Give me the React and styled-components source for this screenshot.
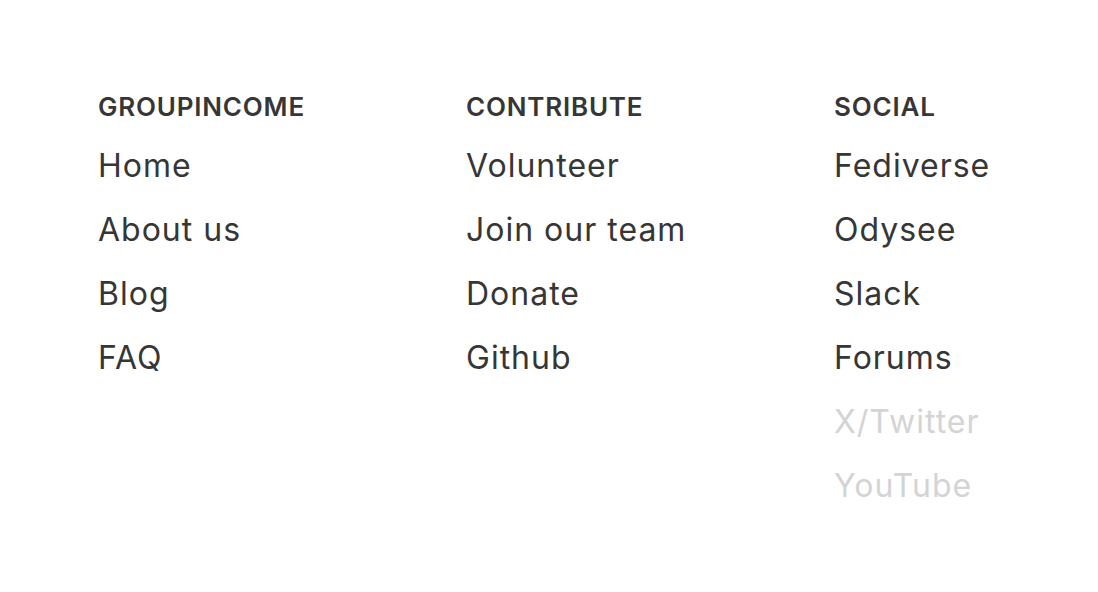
import React from "react"
import styled, { createGlobalStyle } from "styled-components"

const GlobalStyle = createGlobalStyle`
  html, body {
    margin: 0;
    padding: 0;
    background: #ffffff;
  }
  body {
    font-family: Inter, "Open Sans", sans-serif;
    color: #363636;
  }
`

const columns = [
  {
    title: "GROUPINCOME",
    links: [{ label: "Home" }, { label: "About us" }, { label: "Blog" }, { label: "FAQ" }],
  },
  {
    title: "CONTRIBUTE",
    links: [{ label: "Volunteer" }, { label: "Join our team" }, { label: "Donate" }, { label: "Github" }],
  },
  {
    title: "SOCIAL",
    links: [
      { label: "Fediverse" },
      { label: "Odysee" },
      { label: "Slack" },
      { label: "Forums" },
      { label: "X/Twitter", muted: true },
      { label: "YouTube", muted: true },
    ],
  },
]

const App = () => (
  <>
    <GlobalStyle />
    <Footer>
      <Grid>
        {columns.map(col => (
          <Column key={col.title}>
            <Title>{col.title}</Title>
            <LinkList>
              {col.links.map(link => (
                <li key={link.label}>
                  <Link href="#" $muted={link.muted}>{link.label}</Link>
                </li>
              ))}
            </LinkList>
          </Column>
        ))}
      </Grid>
    </Footer>
  </>
)

export default App

const Footer = styled.footer`
  width: 1098px;
  height: 592px;
  box-sizing: border-box;
  padding: 91px 0 0 98px;
`

const Grid = styled.div`
  display: grid;
  grid-template-columns: 368px 368px 264px;
`

const Column = styled.div`
  display: flex;
  flex-direction: column;
`

const Title = styled.h4`
  margin: 0;
  font-size: 26px;
  line-height: 32px;
  font-weight: 600;
  letter-spacing: 0.8px;
  color: #363636;
`

const LinkList = styled.ul`
  list-style: none;
  margin: 11px 0 0;
  padding: 0;
  display: flex;
  flex-direction: column;
`

const Link = styled.a`
  display: block;
  height: 64px;
  font-size: 32px;
  line-height: 64px;
  letter-spacing: 1px;
  text-decoration: none;
  color: ${p => (p.$muted ? "#d4d4d4" : "#363636")};
`
